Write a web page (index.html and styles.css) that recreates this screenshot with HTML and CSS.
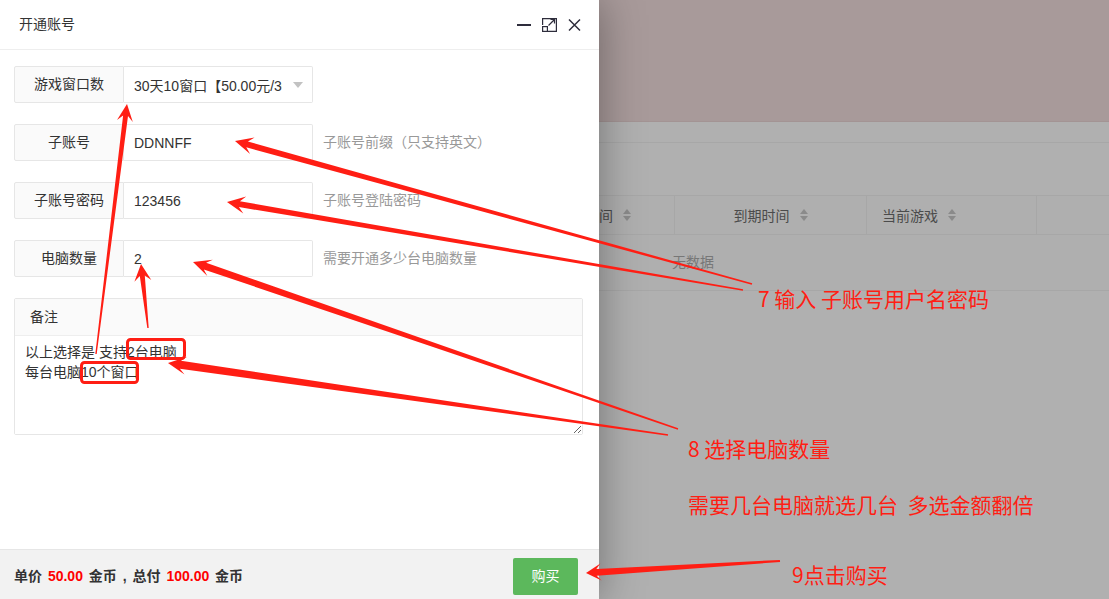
FILE: index.html
```html
<!DOCTYPE html>
<html lang="zh-CN">

<head>
    <meta charset="UTF-8">
    <meta name="viewport" content="width=device-width, initial-scale=1.0">
    <title>开通账号</title>
    <link rel="stylesheet" href="styles.css">
</head>

<body>
    <div class="page">
        <div class="layer">
            <div class="layer-title">
                <span>开通账号</span>
                <span class="layer-setwin">
                    <svg width="14" height="14" viewBox="0 0 14 14"><rect x="0" y="6" width="14" height="2" fill="#2e2d3c"/></svg>
                    <svg width="15" height="14" viewBox="0 0 15 14" fill="none" stroke="#2e2d3c" stroke-width="1.2">
                        <path d="M0.6 7V0.6H14.4V13.4H6"/>
                        <rect x="0.6" y="8.6" width="4.8" height="4.8"/>
                        <path d="M6.5 7.5L12.5 1.5M8.5 1.5H12.5V5.5"/>
                    </svg>
                    <svg width="13" height="14" viewBox="0 0 13 14" fill="none" stroke="#2e2d3c" stroke-width="1.5"><path d="M1 1.5L12 12.5M12 1.5L1 12.5"/></svg>
                </span>
            </div>
            <div class="layer-content">
                <div class="form-item">
                    <label class="form-label">游戏窗口数</label>
                    <div class="input-inline">
                        <input class="input select-title" value="30天10窗口【50.00元/30天】" readonly>
                        <i class="edge"></i>
                    </div>
                </div>
                <div class="form-item">
                    <label class="form-label">子账号</label>
                    <div class="input-inline"><input class="input" value="DDNNFF"></div>
                    <div class="form-mid">子账号前缀（只支持英文）</div>
                </div>
                <div class="form-item">
                    <label class="form-label">子账号密码</label>
                    <div class="input-inline"><input class="input" value="123456"></div>
                    <div class="form-mid">子账号登陆密码</div>
                </div>
                <div class="form-item">
                    <label class="form-label">电脑数量</label>
                    <div class="input-inline"><input class="input" value="2"></div>
                    <div class="form-mid">需要开通多少台电脑数量</div>
                </div>
                <div class="form-pane">
                    <div class="pane-label">备注</div>
                    <textarea class="textarea">以上选择是 支持2台电脑
每台电脑10个窗口</textarea>
                </div>
            </div>
            <div class="layer-btn">
                <div class="total">单价 <em>50.00</em> 金币 , 总付 <em>100.00</em> 金币</div>
                <a class="btn">购买</a>
            </div>
        </div>

        <div class="backdrop">
            <div class="bd-banner"></div>
            <div class="bd-tabs"></div>
            <div class="bd-table">
                <div class="th-row">
                    <div class="th th-first">间<span class="sort"><i class="up"></i><i class="down"></i></span></div>
                    <div class="th th-center">到期时间<span class="sort"><i class="up"></i><i class="down"></i></span></div>
                    <div class="th th-left">当前游戏<span class="sort"><i class="up"></i><i class="down"></i></span></div>
                    <div class="th"></div>
                </div>
                <div class="empty-row">无数据</div>
            </div>
        </div>
    </div>

    <!-- annotations -->
    <svg class="marks" id="marks" width="1109" height="599" viewBox="0 0 1109 599">
        <rect x="127.5" y="339.5" width="57" height="19" rx="3" fill="none" stroke="#ff1e14" stroke-width="3"/>
        <rect x="81.5" y="362.5" width="56" height="20" rx="3" fill="none" stroke="#ff1e14" stroke-width="3"/>
    </svg>
    <div class="note note7">7 输入 子账号用户名密码</div>
    <div class="note note8">8 选择电脑数量</div>
    <div class="note note8b">需要几台电脑就选几台&nbsp;&nbsp;多选金额翻倍</div>
    <div class="note note9">9点击购买</div>

    <script type="text/javascript">
        // tail x, tail y, tip x, tip y, head length, head width, shaft width, tail width
        var arrows = [
            [96, 354, 127, 104, 17, 16, 5, 1.5],
            [148, 328, 141, 264, 17, 17, 5, 1.5],
            [752, 284, 235, 141, 18, 17, 6, 1.5],
            [743, 290, 227, 202, 18, 17, 6, 1.5],
            [678, 429, 193, 262, 18, 17, 7, 1.5],
            [668, 435, 168, 363, 18, 18, 8, 1.5],
            [780, 561, 586, 573, 15, 17, 7, 2]
        ];

        var svg = document.getElementById("marks");

        arrows.forEach(function(a) {
            var dx = a[2] - a[0], dy = a[3] - a[1];
            var len = Math.sqrt(dx * dx + dy * dy);
            var ux = dx / len, uy = dy / len;
            var nx = -uy, ny = ux;
            var bx = a[2] - ux * a[4], by = a[3] - uy * a[4];
            var jx = a[2] - ux * a[4] * 0.7, jy = a[3] - uy * a[4] * 0.7;
            var pts = [
                [a[0] + nx * a[7] / 2, a[1] + ny * a[7] / 2],
                [jx + nx * a[6] / 2, jy + ny * a[6] / 2],
                [bx + nx * a[5] / 2, by + ny * a[5] / 2],
                [a[2], a[3]],
                [bx - nx * a[5] / 2, by - ny * a[5] / 2],
                [jx - nx * a[6] / 2, jy - ny * a[6] / 2],
                [a[0] - nx * a[7] / 2, a[1] - ny * a[7] / 2]
            ];
            var poly = document.createElementNS("http://www.w3.org/2000/svg", "polygon");
            poly.setAttribute("points", pts.map(function(p) {
                return p[0].toFixed(1) + "," + p[1].toFixed(1);
            }).join(" "));
            poly.setAttribute("fill", "#ff1e14");
            svg.appendChild(poly);
        });
    </script>
</body>

</html>
```

FILE: styles.css
```css
body {
    margin: 0;
    font-family: "Liberation Sans", "Noto Sans CJK SC", sans-serif;
    font-size: 14px;
    color: #333;
    overflow: hidden;
}

.page {
    display: flex;
    height: 599px;
}

/* dialog */
.layer {
    width: 599px;
    flex-shrink: 0;
    display: flex;
    flex-direction: column;
    background: #fff;
    box-shadow: 1px 1px 40px rgba(0, 0, 0, .35);
    position: relative;
    z-index: 1;
}

.layer-title {
    height: 49px;
    line-height: 49px;
    padding-left: 19px;
    border-bottom: 1px solid #eee;
    display: flex;
    justify-content: space-between;
    color: #333;
}

.layer-setwin {
    display: flex;
    align-items: center;
    padding-right: 18px;
}

.layer-setwin svg {
    display: block;
    margin-left: 11px;
}

.layer-content {
    flex: 1;
    padding: 16px 16px 0 14px;
}

.form-item {
    display: flex;
    height: 37px;
    margin-bottom: 21px;
}

.form-label {
    width: 110px;
    box-sizing: border-box;
    border: 1px solid #e6e6e6;
    background: #fafafa;
    text-align: center;
    line-height: 35px;
    border-radius: 2px 0 0 2px;
}

.input-inline {
    width: 189px;
    position: relative;
}

.input {
    display: block;
    width: 100%;
    height: 37px;
    box-sizing: border-box;
    border: 1px solid #e6e6e6;
    border-left: 0;
    border-radius: 0 2px 2px 0;
    padding: 0 10px;
    font: inherit;
    color: #333;
    outline: none;
    background: #fff;
}

.select-title {
    padding-right: 30px;
}

.edge {
    position: absolute;
    right: 10px;
    top: 16px;
    width: 0;
    height: 0;
    border: 5px solid transparent;
    border-top: 6px solid #c2c2c2;
    border-bottom: 0;
}

.form-mid {
    padding-left: 10px;
    line-height: 37px;
    color: #999;
}

.form-pane {
    border: 1px solid #e6e6e6;
    border-radius: 2px;
}

.pane-label {
    height: 36px;
    line-height: 36px;
    padding-left: 15px;
    background: #fafafa;
    border-bottom: 1px solid #eee;
}

.textarea {
    display: block;
    width: 100%;
    height: 98px;
    box-sizing: border-box;
    border: 0;
    padding: 6px 10px;
    font: inherit;
    line-height: 20px;
    color: #333;
    outline: none;
}

.layer-btn {
    height: 49px;
    border-top: 1px solid #e6e6e6;
    background: #f2f2f2;
    display: flex;
    align-items: center;
    justify-content: space-between;
    padding: 0 21px 0 14px;
}

.total {
    font-weight: bold;
    word-spacing: 2px;
}

.total em {
    font-style: normal;
    color: #f00;
}

.btn {
    width: 65px;
    height: 37px;
    line-height: 37px;
    margin-top: 4px;
    text-align: center;
    background: #5cb85c;
    color: #fff;
    border-radius: 2px;
}

/* page behind the shade */
.backdrop {
    flex: 1;
    background: #b0b0b0;
    overflow: hidden;
}

.bd-banner {
    height: 121px;
    background: #a89a9a;
    border-bottom: 1px solid #a39494;
}

.bd-tabs {
    height: 20px;
    border-bottom: 1px solid #a7a7a7;
}

.bd-table {
    margin-top: 52px;
    border-top: 1px solid #a7a7a7;
    background: #afafaf;
}

.th-row {
    display: grid;
    grid-template-columns: 76px 192px 170px 1fr;
    height: 38px;
    border-bottom: 1px solid #a7a7a7;
}

.th {
    display: flex;
    align-items: center;
    border-right: 1px solid #a7a7a7;
    color: #4b4b4b;
}

.th:last-child {
    border-right: 0;
}

.th-center {
    justify-content: center;
}

.th-left {
    padding-left: 15px;
}

.sort {
    display: inline-flex;
    flex-direction: column;
    margin-left: 10px;
}

.sort i {
    width: 0;
    height: 0;
    border: 4.5px solid transparent;
}

.sort .up {
    border-top: 0;
    border-bottom: 5px solid #8a8a8a;
    margin-bottom: 2px;
}

.sort .down {
    border-bottom: 0;
    border-top: 5px solid #8a8a8a;
}

.empty-row {
    height: 55px;
    line-height: 55px;
    padding-left: 73px;
    color: #777;
    border-bottom: 1px solid #a7a7a7;
}

/* screenshot annotations */
.marks {
    position: absolute;
    left: 0;
    top: 0;
    z-index: 2;
    pointer-events: none;
}

.note {
    position: absolute;
    z-index: 3;
    font-family: "Noto Sans CJK SC", sans-serif;
    font-size: 21px;
    line-height: 24px;
    color: #ff1e14;
    white-space: pre;
}

.note7 {
    left: 758px;
    top: 286px;
}

.note8 {
    left: 688px;
    top: 436px;
}

.note8b {
    left: 688px;
    top: 492px;
}

.note9 {
    left: 792px;
    top: 562px;
}
```
